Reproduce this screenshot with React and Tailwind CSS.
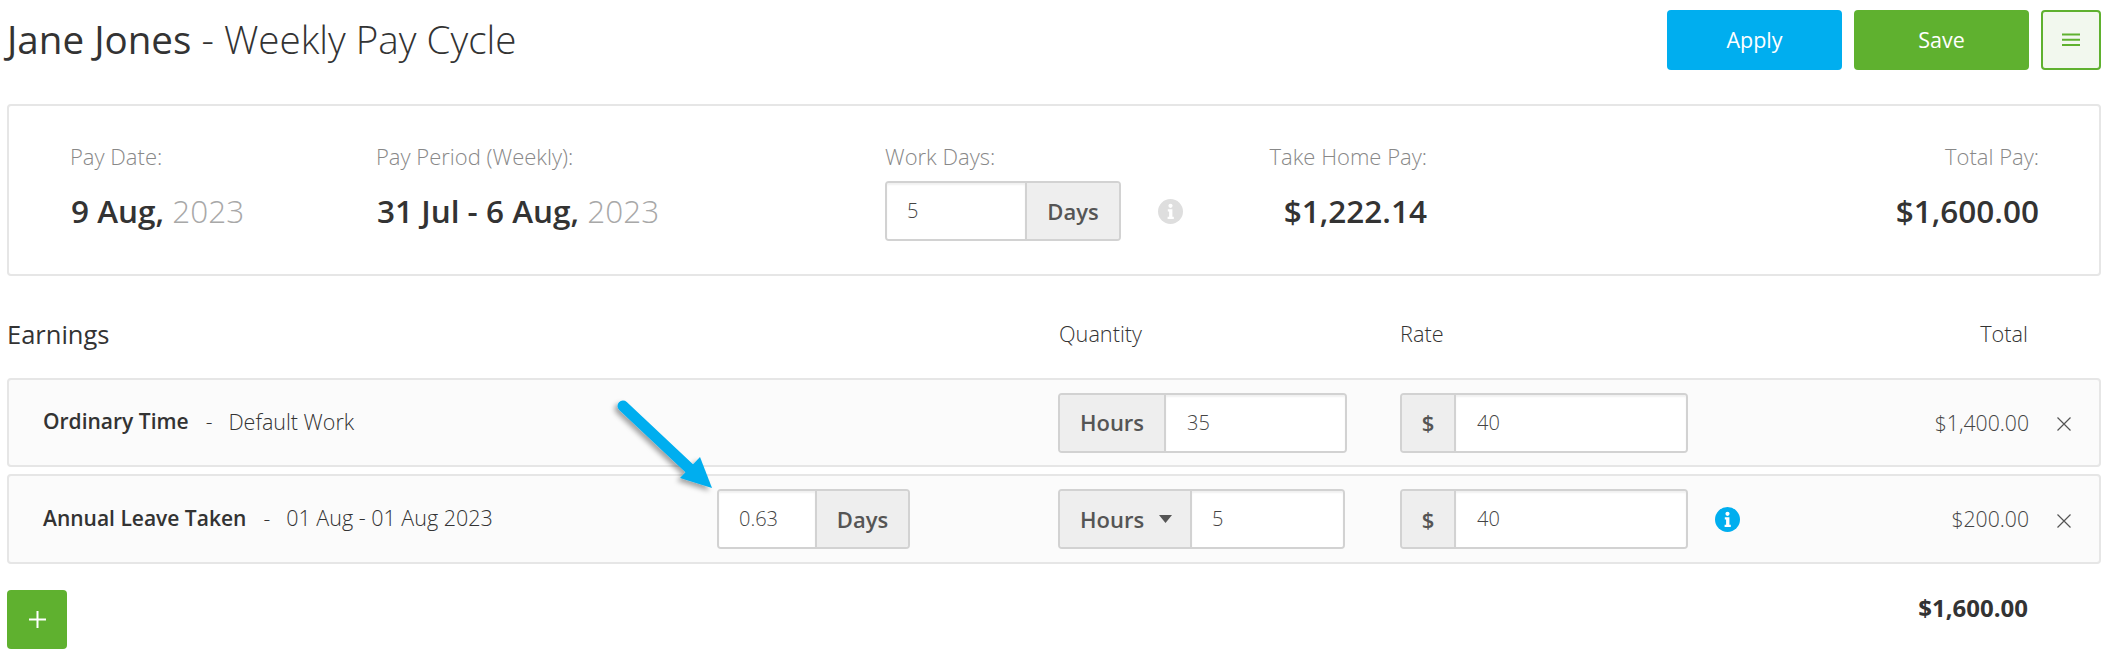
const font = { fontFamily: '"Open Sans", "Noto Sans", sans-serif' };

function InfoIcon({ bg, size = 25 }) {
  return (
    <svg width={size} height={size} viewBox="0 0 25 25" className="block shrink-0">
      <circle cx="12.5" cy="12.5" r="12.5" fill={bg} />
      <circle cx="12.5" cy="6.8" r="2.1" fill="#fff" />
      <path d="M9.8 10.2h4.6v7.6h1.4v2.2H9.6v-2.2h1.5v-5.4H9.8z" fill="#fff" />
    </svg>
  );
}

function CloseIcon() {
  return (
    <svg width="14" height="14" viewBox="0 0 14 14" className="block">
      <path d="M0.5 0.5L13.5 13.5M13.5 0.5L0.5 13.5" stroke="#555" strokeWidth="1.2" fill="none" />
    </svg>
  );
}

function Addon({ children, className = "" }) {
  return (
    <div className={"flex items-center justify-center bg-[#eeeeee] text-[22px] font-semibold text-[#555] " + className}>
      {children}
    </div>
  );
}

function Field({ children, className = "" }) {
  return (
    <div className={"flex items-center bg-white text-[20px] font-light text-[#444] shadow-[inset_0_2px_2px_rgba(0,0,0,0.06)] " + className}>
      {children}
    </div>
  );
}

function Group({ className = "", children }) {
  return (
    <div className={"flex shrink-0 overflow-hidden rounded-[4px] border-2 border-[#d2d2d2] " + className}>{children}</div>
  );
}

function Summary({ label, children, className = "", valueClass = "" }) {
  return (
    <div className={className}>
      <div className="text-[22px] leading-[28px] font-light text-[#888]">{label}</div>
      <div className={"mt-[21px] text-[31.5px] leading-[40px] font-semibold text-[#333] " + valueClass}>{children}</div>
    </div>
  );
}

function Row({ name, detail, middle, qty, info, total, heightClass }) {
  return (
    <div className={"flex items-center rounded-[4px] border-2 border-[#e6e6e6] bg-[#fbfbfb] " + heightClass}>
      <div className="flex w-[672px] shrink-0 items-center pb-[1px] pl-[34px] text-[21px] text-[#333]">
        <span className="font-semibold">{name}</span>
        <span className="ml-[17px] font-light">-</span>
        <span className="ml-[16px] text-[21.5px] font-light">{detail}</span>
      </div>
      <div className="w-[377px] shrink-0">{middle}</div>
      <div className="w-[342px] shrink-0">{qty}</div>
      <Group className="h-[60px] w-[288px]">
        <Addon className="w-[54px] shrink-0 border-r-2 border-[#d2d2d2]">$</Addon>
        <Field className="flex-1 pl-[21px]">40</Field>
      </Group>
      <div className="w-[27px] shrink-0" />
      <div className="w-[25px] shrink-0">{info}</div>
      <div className="flex-1 text-right text-[21.2px] font-light text-[#444]">{total}</div>
      <div className="mt-[3px] mr-[28px] ml-[28px] shrink-0">
        <CloseIcon />
      </div>
    </div>
  );
}

export default function App() {
  return (
    <div style={font} className="relative h-[658px] w-[2106px] overflow-hidden bg-white pr-[5px] pl-[7px] text-[#333]">
      <div className="flex h-[104px] items-start justify-between pt-[10px]">
        <h1 className="text-[38.6px] leading-[58px] font-light text-[#333]">
          <span className="font-normal">Jane Jones</span> - Weekly Pay Cycle
        </h1>
        <div className="flex gap-[12px]">
          <button className="h-[60px] w-[175px] rounded-[4px] bg-[#00aeef] text-[21.5px] text-white">Apply</button>
          <button className="h-[60px] w-[175px] rounded-[4px] bg-[#5fb12f] text-[21.5px] text-white">Save</button>
          <button className="flex h-[60px] w-[60px] items-center justify-center rounded-[4px] border-2 border-[#5fb12f] bg-[#f2f8ee]">
            <svg width="18" height="14" viewBox="0 0 18 14" className="block">
              <path d="M0 1.5h18M0 6.75h18M0 12h18" stroke="#5fb12f" strokeWidth="2" />
            </svg>
          </button>
        </div>
      </div>

      <div className="flex h-[172px] items-start rounded-[4px] border-2 border-[#e6e6e6] pt-[36px]">
        <Summary label="Pay Date:" className="w-[367px] shrink-0 pl-[61px]" valueClass="ml-[1px]">
          9 Aug, <span className="font-light text-[#a8a8a8]">2023</span>
        </Summary>
        <Summary label="Pay Period (Weekly):" className="w-[509px] shrink-0" valueClass="ml-[1px]">
          31 Jul - 6 Aug, <span className="font-light text-[#a8a8a8]">2023</span>
        </Summary>
        <div className="w-[285px] shrink-0">
          <div className="text-[22px] leading-[28px] font-light text-[#888]">Work Days:</div>
          <div className="mt-[11px] flex items-center">
            <Group className="h-[60px] w-[236px]">
              <Field className="flex-1 pl-[20px]">5</Field>
              <Addon className="w-[94px] shrink-0 border-l-2 border-[#d2d2d2]">Days</Addon>
            </Group>
            <div className="ml-[37px] shrink-0">
              <InfoIcon bg="#dedede" />
            </div>
          </div>
        </div>
        <Summary label="Take Home Pay:" className="w-[257px] shrink-0 text-right">
          $1,222.14
        </Summary>
        <Summary label="Total Pay:" className="ml-auto pr-[60px] text-right">
          $1,600.00
        </Summary>
      </div>

      <div className="flex h-[102px] items-center pt-[14px] text-[21.7px] font-light">
        <div className="w-[1052px] shrink-0 text-[25.5px] font-medium">Earnings</div>
        <div className="w-[341px] shrink-0">Quantity</div>
        <div className="flex-1">Rate</div>
        <div className="pr-[73px]">Total</div>
      </div>

      <div className="flex flex-col gap-[7px]">
        <Row
          name="Ordinary Time"
          detail="Default Work"
          heightClass="h-[89px]"
          qty={
            <Group className="h-[60px] w-[289px]">
              <Addon className="w-[106px] shrink-0 border-r-2 border-[#d2d2d2]">Hours</Addon>
              <Field className="flex-1 pl-[21px]">35</Field>
            </Group>
          }
          total="$1,400.00"
        />
        <Row
          name="Annual Leave Taken"
          detail="01 Aug - 01 Aug 2023"
          heightClass="h-[90px]"
          middle={
            <Group className="ml-[36px] h-[60px] w-[193px]">
              <Field className="w-[96px] shrink-0 pl-[20px]">0.63</Field>
              <Addon className="flex-1 border-l-2 border-[#d2d2d2]">Days</Addon>
            </Group>
          }
          qty={
            <Group className="h-[60px] w-[287px]">
              <Addon className="w-[132px] shrink-0 justify-start border-r-2 border-[#d2d2d2] pl-[20px]">
                Hours
                <svg width="13" height="8" viewBox="0 0 13 8" className="ml-[15px] block">
                  <path d="M0 0h13L6.5 8z" fill="#555" />
                </svg>
              </Addon>
              <Field className="flex-1 pl-[20px]">5</Field>
            </Group>
          }
          info={<InfoIcon bg="#00aeef" />}
          total="$200.00"
        />
      </div>

      <div className="mt-[26px] flex items-start justify-between">
        <button className="flex h-[59px] w-[60px] items-center justify-center rounded-[4px] bg-[#5fb12f]">
          <svg width="17" height="17" viewBox="0 0 17 17" className="block">
            <path d="M8.5 0v17M0 8.5h17" stroke="#fff" strokeWidth="2" />
          </svg>
        </button>
        <div className="mt-[-9px] mr-[73px] text-[24px] leading-[54px] font-bold text-[#333]">$1,600.00</div>
      </div>

      <svg width="110" height="100" viewBox="0 0 110 100" className="absolute top-[395px] left-[610px] overflow-visible">
        <defs>
          <filter id="sh" x="-20%" y="-20%" width="140%" height="140%">
            <feDropShadow dx="-3" dy="3" stdDeviation="2.5" floodColor="#000" floodOpacity="0.35" />
          </filter>
        </defs>
        <g filter="url(#sh)">
          <path d="M13 11L80 74" stroke="#00aeef" strokeWidth="11" strokeLinecap="round" fill="none" />
          <path d="M102 93L90 62L70 83z" fill="#00aeef" />
        </g>
      </svg>
    </div>
  );
}
